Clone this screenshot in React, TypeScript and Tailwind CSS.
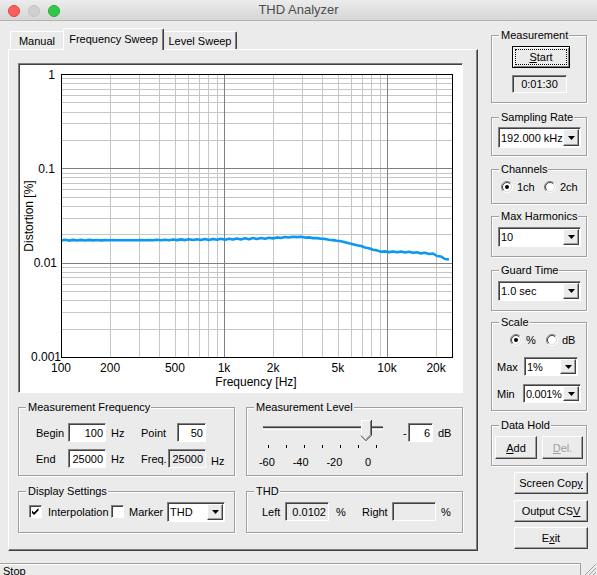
import React from 'react';

type P = { className?: string; children?: React.ReactNode };

const ui = "font-['Liberation_Sans',Arial,sans-serif]";

function Raised({ className = '', children }: P) {
  return (
    <div
      className={`flex items-center justify-center border border-t-white border-l-white border-r-[#404040] border-b-[#404040] bg-[#ebebeb] shadow-[inset_-1px_-1px_0_#a0a0a0] ${className}`}
    >
      {children}
    </div>
  );
}

function Sunken({ className = '', children }: P) {
  return (
    <div
      className={`flex items-center border border-t-[#808080] border-l-[#808080] border-r-white border-b-white shadow-[inset_1px_1px_0_#404040] ${className}`}
    >
      {children}
    </div>
  );
}

function Field({ value, className = '', gray }: { value: string; className?: string; gray?: boolean }) {
  return (
    <Sunken className={`justify-end pr-[2px] ${gray ? 'bg-[#ebebeb]' : 'bg-white'} ${className}`}>
      {value}
    </Sunken>
  );
}

function Combo({ value, className = '' }: { value: string; className?: string }) {
  return (
    <div
      className={`flex items-stretch border border-t-[#808080] border-l-[#808080] border-r-white border-b-white bg-white py-[1px] pr-[1px] shadow-[inset_1px_1px_0_#404040] ${className}`}
    >
      <span className="flex flex-1 items-center overflow-hidden whitespace-nowrap pl-[2px]">{value}</span>
      <Raised className="w-[16px] shrink-0">
        <svg width="7" height="4" viewBox="0 0 7 4">
          <path d="M0 0h7L3.5 4z" fill="#000" />
        </svg>
      </Raised>
    </div>
  );
}

function Radio({ checked }: { checked?: boolean }) {
  return (
    <svg width="12" height="12" viewBox="0 0 12 12" className="shrink-0">
      <circle cx="6" cy="6" r="5" fill="#fff" />
      <path d="M2.1 9.9A5.5 5.5 0 0 1 9.9 2.1" fill="none" stroke="#808080" />
      <path d="M9.9 2.1A5.5 5.5 0 0 1 2.1 9.9" fill="none" stroke="#fff" />
      <path d="M2.8 9.2A4.5 4.5 0 0 1 9.2 2.8" fill="none" stroke="#404040" />
      <path d="M9.2 2.8A4.5 4.5 0 0 1 2.8 9.2" fill="none" stroke="#dcdcdc" />
      {checked && <circle cx="6" cy="6" r="2" fill="#000" />}
    </svg>
  );
}

function Check({ checked }: { checked?: boolean }) {
  return (
    <Sunken className="h-[13px] w-[13px] shrink-0 justify-center bg-white">
      {checked && (
        <svg width="9" height="9" viewBox="0 0 9 9">
          <path d="M1 3.5l2 2 4.5-4.5v2.5l-4.5 4.5-2-2z" fill="#000" />
        </svg>
      )}
    </Sunken>
  );
}

function Group({ title, className = '', children }: P & { title: string }) {
  return (
    <fieldset
      className={`min-w-0 border border-[#a0a0a0] px-0 shadow-[inset_1px_1px_0_#ffffff,1px_1px_0_#ffffff] ${className}`}
    >
      <legend className="ml-[7px] bg-[#ebebeb] pl-[2px] pr-[1px] leading-[14px]">{title}</legend>
      {children}
    </fieldset>
  );
}

// thd curve anchors: [log10(freq), distortion %]
const anchors: [number, number][] = [
  [2.0, 0.0173],
  [2.5, 0.0173],
  [3.0, 0.0177],
  [3.25, 0.0181],
  [3.45, 0.0188],
  [3.6, 0.018],
  [3.72, 0.0168],
  [3.85, 0.0148],
  [3.96, 0.0131],
  [4.15, 0.0129],
  [4.28, 0.0124],
  [4.398, 0.0104],
];

function Chart() {
  const L = 42;
  const T = 10;
  const R = 433;
  const B = 293;
  const DX = 163;
  const DY = 94.33;
  const xOf = (f: number) => L + (Math.log10(f) - 2) * DX;
  const yOf = (v: number) => T - Math.log10(v) * DY;

  const minorX: number[] = [];
  const majorX: number[] = [];
  for (const d of [100, 1000, 10000]) {
    for (let m = 1; m < 10; m++) {
      const f = d * m;
      if (f <= 100 || f >= 25000) continue;
      (m === 1 ? majorX : minorX).push(Math.round(xOf(f)) + 0.5);
    }
  }
  const minorY: number[] = [];
  const majorY: number[] = [];
  for (const k of [-3, -2, -1]) {
    for (let m = 1; m < 10; m++) {
      if (k === -3 && m === 1) continue;
      const v = m * Math.pow(10, k);
      (m === 1 ? majorY : minorY).push(Math.round(yOf(v)) + 0.5);
    }
  }

  const pts: string[] = [];
  for (let x = L; x <= R; x += 4) {
    const lf = 2 + (x - L) / DX;
    let i = 0;
    while (i < anchors.length - 2 && anchors[i + 1][0] < lf) i++;
    const [a0, v0] = anchors[i];
    const [a1, v1] = anchors[i + 1];
    const t = Math.min(1, Math.max(0, (lf - a0) / (a1 - a0)));
    const lv = Math.log10(v0) + (Math.log10(v1) - Math.log10(v0)) * t;
    const wobble = Math.sin(x * 0.8) * 0.5;
    pts.push(`${x},${(T - lv * DY + wobble).toFixed(1)}`);
  }

  const xl: [number, string][] = [
    [100, '100'],
    [200, '200'],
    [500, '500'],
    [1000, '1k'],
    [2000, '2k'],
    [5000, '5k'],
    [10000, '10k'],
    [20000, '20k'],
  ];
  const yl: [number, string, number][] = [
    [1, '1', 36],
    [0.1, '0.1', 36],
    [0.01, '0.01', 38],
    [0.001, '0.001', 42],
  ];

  return (
    <svg width="443" height="328" viewBox="0 0 443 328" className="block">
      <g shapeRendering="crispEdges">
        {minorX.map((x) => (
          <line key={'mx' + x} x1={x} x2={x} y1={T} y2={B} stroke="#c6c6c6" />
        ))}
        {minorY.map((y) => (
          <line key={'my' + y} x1={L} x2={R} y1={y} y2={y} stroke="#c6c6c6" />
        ))}
        {majorX.map((x) => (
          <line key={'Mx' + x} x1={x} x2={x} y1={T} y2={B} stroke="#808080" />
        ))}
        {majorY.map((y) => (
          <line key={'My' + y} x1={L} x2={R} y1={y} y2={y} stroke="#808080" />
        ))}
      </g>
      <polyline points={pts.join(' ')} fill="none" stroke="#0a98f2" strokeWidth="2.6" strokeLinejoin="round" />
      <rect x={L + 0.5} y={T + 0.5} width={R - L} height={B - T} fill="none" stroke="#000" shapeRendering="crispEdges" />
      <g fontFamily="'Liberation Sans', Arial, sans-serif" fontSize="12" fill="#000">
        {yl.map(([v, s, x]) => (
          <text key={s} x={x} y={yOf(v) + 4.5} textAnchor="end">
            {s}
          </text>
        ))}
        {xl.map(([f, s]) => (
          <text key={s} x={xOf(f)} y={308} textAnchor="middle">
            {s}
          </text>
        ))}
        <text x={237} y={322} textAnchor="middle">
          Frequency [Hz]
        </text>
        <text x={0} y={0} textAnchor="middle" transform="translate(14 152) rotate(-90)">
          Distortion [%]
        </text>
      </g>
    </svg>
  );
}

function Slider() {
  const ticks = [5, 23, 41, 59, 77, 95, 113];
  return (
    <svg width="122" height="30" viewBox="0 0 122 30" className="block" shapeRendering="crispEdges">
      <rect x="0" y="7" width="120" height="1" fill="#808080" />
      <rect x="0" y="8" width="120" height="1" fill="#404040" />
      <rect x="0" y="9" width="120" height="1" fill="#dcdcdc" />
      <rect x="0" y="10" width="120" height="1" fill="#fff" />
      {ticks.map((x) => (
        <rect key={x} x={x} y="26" width="1" height="3" fill="#000" />
      ))}
      <g shapeRendering="auto">
        <path d="M98 1H108V16L103 21L98 16Z" fill="#ebebeb" />
        <path d="M98.5 16V1.5H107.5" fill="none" stroke="#fff" />
        <path d="M108.5 1V16.2L103 21.7L98 16.7" fill="none" stroke="#404040" />
        <path d="M107.5 2V15.8L103 20.3" fill="none" stroke="#808080" />
      </g>
    </svg>
  );
}

function Tabs() {
  return (
    <div className="flex h-[21px] items-end pl-[2px]">
      <div className="flex h-[18px] w-[53px] items-center justify-center rounded-tl-[2px] border-t border-l border-white">
        Manual
      </div>
      <div className="relative z-10 -mb-px flex h-[22px] w-[101px] items-center justify-center rounded-t-[2px] border-t border-l border-r border-t-white border-l-white border-r-[#404040] bg-[#ebebeb] pb-[2px] shadow-[inset_-1px_0_0_#808080]">
        Frequency Sweep
      </div>
      <div className="flex h-[18px] w-[73px] items-center justify-center rounded-tr-[2px] border-t border-r border-t-white border-r-[#404040] shadow-[inset_-1px_0_0_#808080]">
        Level Sweep
      </div>
    </div>
  );
}

function LeftPane() {
  return (
    <div className="w-[478px] shrink-0 pl-[8px] pt-[7px]">
      <Tabs />
      <div className="h-[502px] border border-t-white border-l-white border-r-[#404040] border-b-[#404040] pl-[9px] pt-[13px] shadow-[inset_-1px_-1px_0_#808080]">
        <div className="h-[330px] w-[445px] border border-t-[#808080] border-l-[#808080] border-r-white border-b-white bg-white shadow-[inset_1px_1px_0_#404040]">
          <Chart />
        </div>

        <div className="mt-[7px] flex gap-[11px]">
          <Group title="Measurement Frequency" className="h-[76px] w-[217px]">
            <div className="mt-[9px] flex h-[19px] items-center pl-[17px]">
              <span className="w-[32px]">Begin</span>
              <Field value="100" className="h-[19px] w-[38px]" />
              <span className="ml-[5px] w-[30px]">Hz</span>
              <span className="w-[36px]">Point</span>
              <Field value="50" className="h-[19px] w-[29px]" />
            </div>
            <div className="mt-[7px] flex h-[19px] items-center pl-[17px]">
              <span className="w-[32px]">End</span>
              <Field value="25000" className="h-[19px] w-[38px]" />
              <span className="ml-[5px] w-[30px]">Hz</span>
              <span className="w-[27px]">Freq.</span>
              <Field value="25000" gray className="h-[19px] w-[38px]" />
              <span className="ml-[5px] mt-[4px]">Hz</span>
            </div>
          </Group>

          <Group title="Measurement Level" className="h-[76px] w-[217px]">
            <div className="mt-[5px] flex items-start pl-[16px]">
              <div className="w-[122px]">
                <Slider />
                <div className="-ml-[13px] mt-[6px] flex leading-[14px]">
                  <span className="w-[36px] text-center">-60</span>
                  <span className="w-[36px] text-center">-40</span>
                  <span className="w-[36px] text-center">-20</span>
                  <span className="w-[36px] text-center">0</span>
                </div>
              </div>
              <div className="ml-[18px] mt-[4px] flex h-[19px] items-center">
                <span className="w-[5px]">-</span>
                <Field value="6" className="h-[19px] w-[25px]" />
                <span className="ml-[5px]">dB</span>
              </div>
            </div>
          </Group>
        </div>

        <div className="mt-[8px] flex gap-[11px]">
          <Group title="Display Settings" className="h-[49px] w-[217px]">
            <div className="mt-[4px] flex h-[19px] items-center pl-[10px]">
              <Check checked />
              <span className="ml-[6px] w-[63px]">Interpolation</span>
              <Check />
              <span className="ml-[5px] w-[38px]">Marker</span>
              <Combo value="THD" className="h-[20px] w-[58px]" />
            </div>
          </Group>

          <Group title="THD" className="h-[49px] w-[217px]">
            <div className="mt-[4px] flex h-[19px] items-center pl-[15px]">
              <span className="w-[23px]">Left</span>
              <Field value="0.0102" gray className="h-[19px] w-[44px]" />
              <span className="ml-[7px] w-[26px]">%</span>
              <span className="w-[30px]">Right</span>
              <Field value="" gray className="h-[19px] w-[44px]" />
              <span className="ml-[5px]">%</span>
            </div>
          </Group>
        </div>
      </div>
    </div>
  );
}

function RightPane() {
  return (
    <div className="ml-[13px] flex w-[106px] flex-col pt-[7px]">
      <Group title="Measurement" className="h-[75px] w-[96px]">
        <div className="ml-[20px] mt-[4px] h-[22px] w-[58px] border border-black bg-[#ebebeb] p-[2px] shadow-[inset_1px_1px_0_#ffffff,inset_-1px_-1px_0_#808080]">
          <div className="flex h-full w-full items-center justify-center border border-dotted border-black">
            <span>
              <span className="underline">S</span>tart
            </span>
          </div>
        </div>
        <Sunken className="ml-[20px] mt-[7px] h-[18px] w-[55px] justify-center bg-[#ebebeb]">0:01:30</Sunken>
      </Group>

      <Group title="Sampling Rate" className="mt-[7px] h-[46px] w-[96px]">
        <Combo value="192.000 kHz" className="ml-[6px] mt-[3px] h-[21px] w-[83px]" />
      </Group>

      <Group title="Channels" className="mt-[6px] h-[42px] w-[96px]">
        <div className="ml-[9px] mt-[5px] flex h-[12px] items-center">
          <Radio checked />
          <span className="ml-[4px] w-[27px]">1ch</span>
          <Radio />
          <span className="ml-[4px]">2ch</span>
        </div>
      </Group>

      <Group title="Max Harmonics" className="mt-[5px] h-[48px] w-[96px]">
        <Combo value="10" className="ml-[6px] mt-[4px] h-[20px] w-[83px]" />
      </Group>

      <Group title="Guard Time" className="mt-[6px] h-[48px] w-[96px]">
        <Combo value="1.0 sec" className="ml-[6px] mt-[4px] h-[20px] w-[83px]" />
      </Group>

      <Group title="Scale" className="mt-[4px] h-[96px] w-[96px]">
        <div className="ml-[18px] mt-[5px] flex h-[12px] items-center">
          <Radio checked />
          <span className="ml-[4px] w-[20px]">%</span>
          <Radio />
          <span className="ml-[4px]">dB</span>
        </div>
        <div className="ml-[5px] mt-[11px] flex h-[19px] items-center">
          <span className="w-[27px]">Max</span>
          <Combo value="1%" className="h-[19px] w-[54px]" />
        </div>
        <div className="ml-[5px] mt-[8px] flex h-[19px] items-center">
          <span className="w-[26px]">Min</span>
          <Combo value="0.001%" className="h-[19px] w-[58px] tracking-[-0.3px]" />
        </div>
      </Group>

      <Group title="Data Hold" className="mt-[7px] h-[48px] w-[96px]">
        <div className="ml-[3px] mt-[4px] flex gap-[5px]">
          <Raised className="h-[23px] w-[42px]">
            <span>
              <span className="underline">A</span>dd
            </span>
          </Raised>
          <Raised className="h-[23px] w-[41px] text-[#a0a0a0]">
            <span>
              <span className="underline">D</span>el.
            </span>
          </Raised>
        </div>
      </Group>

      <Raised className="ml-[23px] mt-[6px] h-[22px] w-[74px]">
        <span>
          Screen Cop<span className="underline">y</span>
        </span>
      </Raised>
      <Raised className="ml-[23px] mt-[6px] h-[22px] w-[74px]">
        <span>
          Output CS<span className="underline">V</span>
        </span>
      </Raised>
      <Raised className="ml-[23px] mt-[5px] h-[22px] w-[74px]">
        <span>
          E<span className="underline">x</span>it
        </span>
      </Raised>
    </div>
  );
}

export default function App() {
  return (
    <div
      className={`flex h-[575px] w-[597px] flex-col overflow-hidden whitespace-nowrap bg-[#ebebeb] text-[11px] leading-[14px] text-black ${ui}`}
    >
      <div className="grid h-[21px] shrink-0 grid-cols-[1fr_auto_1fr] items-center border-b border-[#b4b4b4] bg-linear-to-b from-[#ececec] to-[#d6d6d6]">
        <div className="mt-[1px] flex gap-[8px] pl-[8px]">
          <span className="h-[12px] w-[12px] rounded-full border border-[#e0443e] bg-[#fc605c]" />
          <span className="h-[12px] w-[12px] rounded-full border border-[#c4c4c4] bg-[#d0d0d0]" />
          <span className="h-[12px] w-[12px] rounded-full border border-[#27a83a] bg-[#34c84a]" />
        </div>
        <div className="text-[13px] text-[#4d4d4d]">THD Analyzer</div>
        <div />
      </div>

      <div className="flex flex-1">
        <LeftPane />
        <RightPane />
      </div>

      <div className="flex h-[12px] shrink-0">
        <div className="w-[581px] overflow-hidden border-t border-r border-t-[#a0a0a0] border-r-[#a0a0a0] pl-[3px] leading-[14px] shadow-[inset_0_1px_0_#ffffff]">
          Stop
        </div>
        <svg width="16" height="12" viewBox="0 0 16 12" className="self-end">
          <path d="M15 1L4 12M15 5L8 12M15 9L12 12" stroke="#a0a0a0" />
        </svg>
      </div>
    </div>
  );
}
